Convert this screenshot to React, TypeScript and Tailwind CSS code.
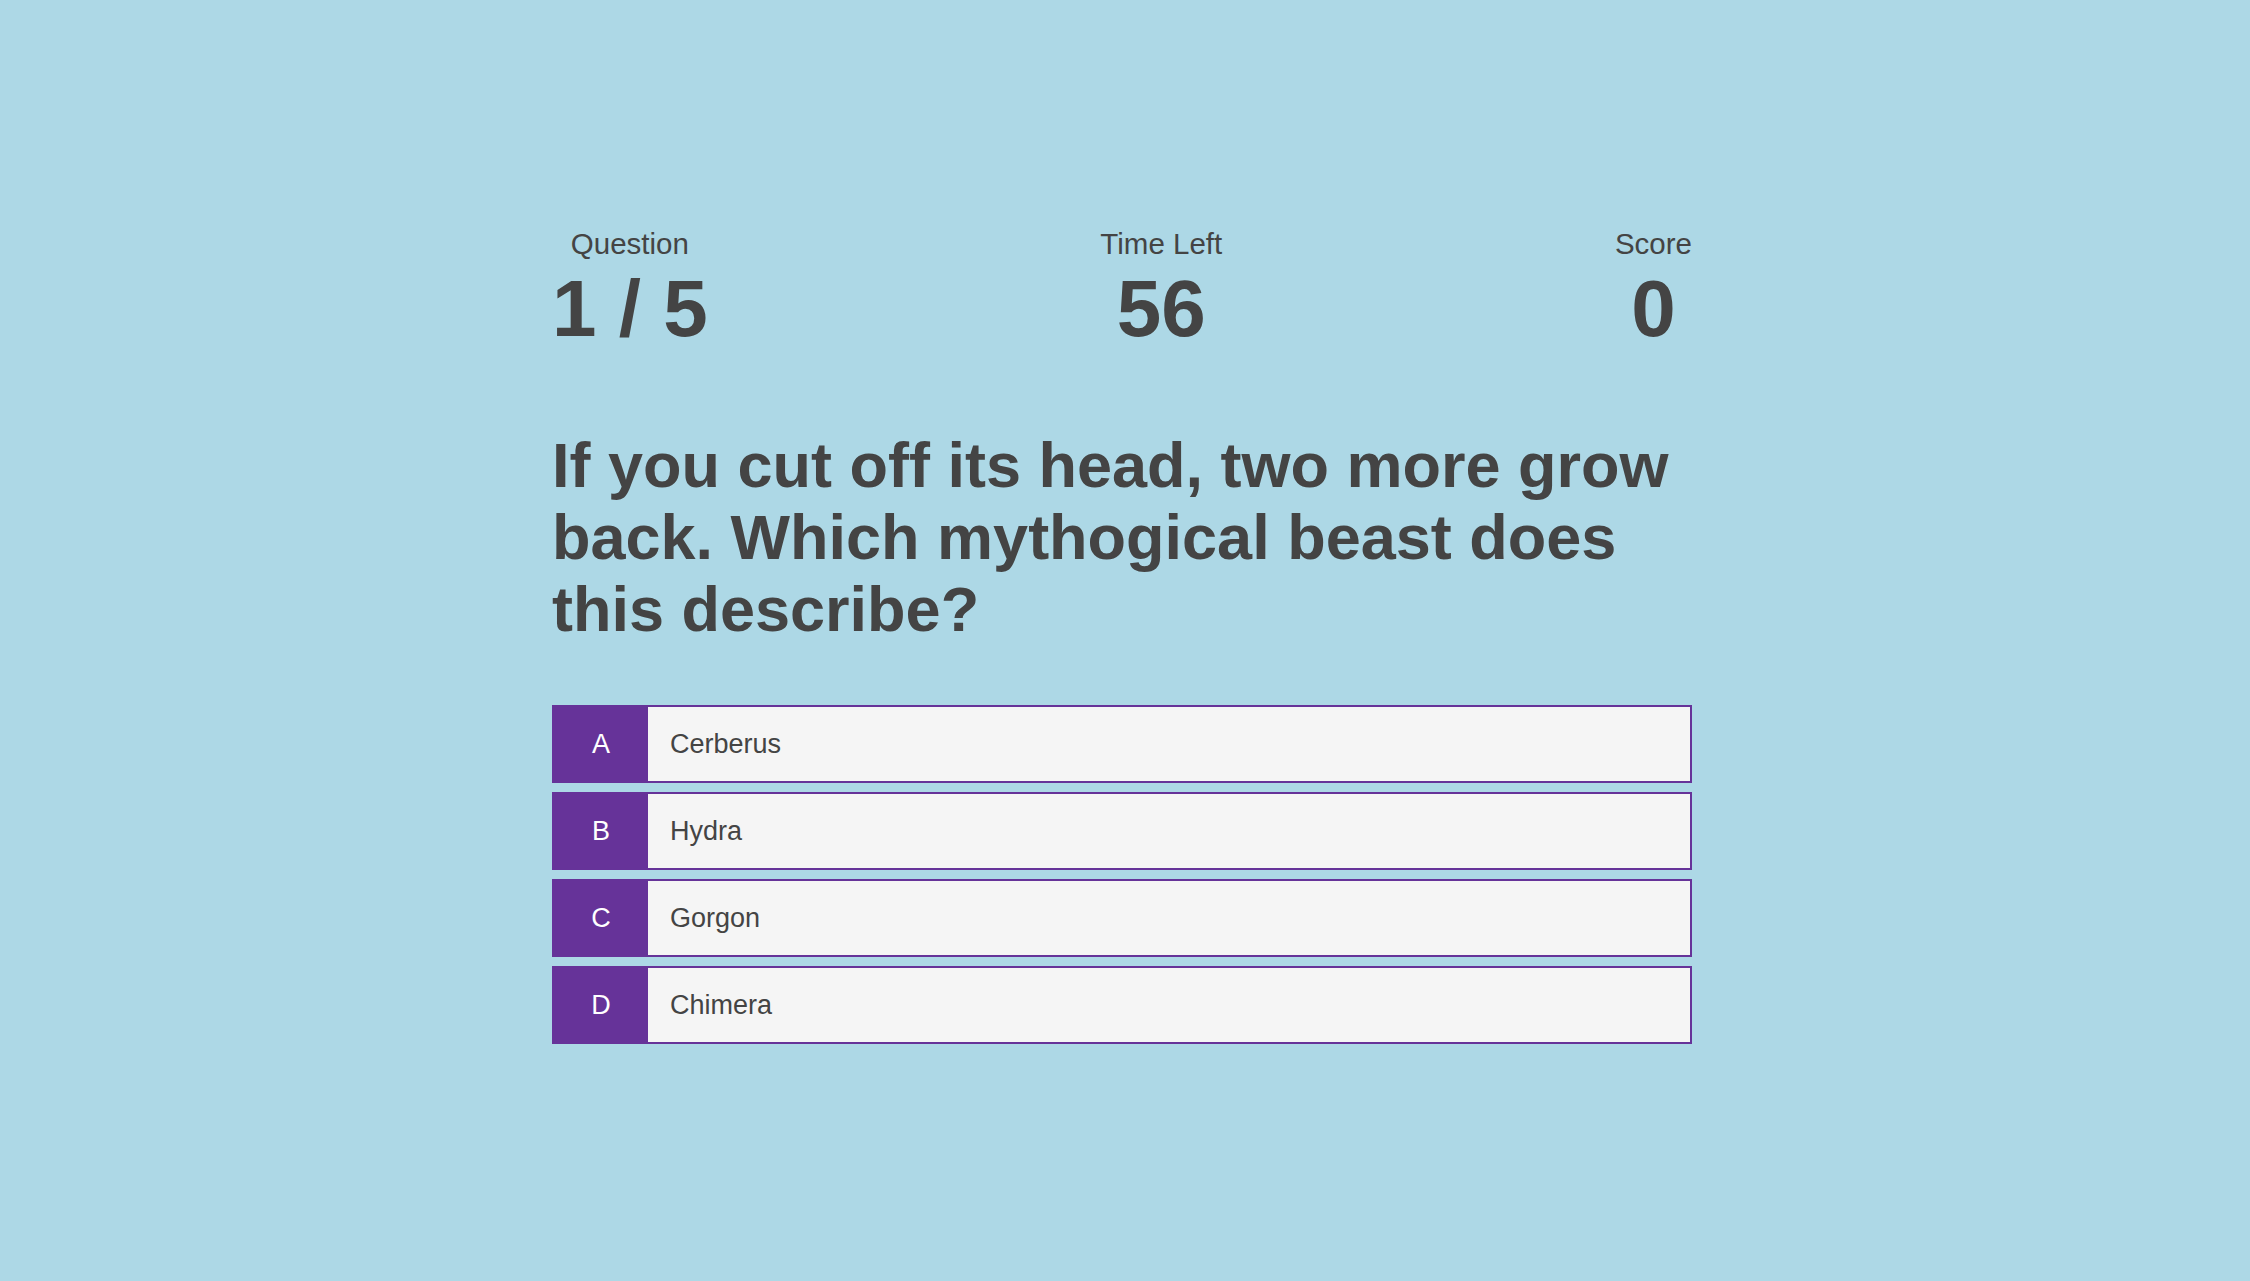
import React from "react";

const answers = [
  { letter: "A", text: "Cerberus" },
  { letter: "B", text: "Hydra" },
  { letter: "C", text: "Gorgon" },
  { letter: "D", text: "Chimera" },
];

function Stat({ label, value }: { label: string; value: string }) {
  return (
    <div className="flex flex-col items-center">
      <div className="text-[29.5px] leading-[34px]">{label}</div>
      <div className="mt-[2px] text-[80px] font-bold leading-[92px]">{value}</div>
    </div>
  );
}

export default function App() {
  return (
    <div
      className="min-h-screen w-full bg-[#add8e6] text-[#444444] flex justify-center pr-[6px]"
      style={{ fontFamily: '"Liberation Sans", Arial, sans-serif' }}
    >
      <div className="w-[1140px] pt-[227px]">
        <div className="flex justify-between">
          <Stat label="Question" value="1 / 5" />
          <Stat label="Time Left" value="56" />
          <Stat label="Score" value="0" />
        </div>
        <h1 className="mt-[74px] text-[63px] font-bold leading-[72px]">
          If you cut off its head, two more grow back. Which mythogical beast does this describe?
        </h1>
        <div className="mt-[60px] flex flex-col gap-[9px]">
          {answers.map((a) => (
            <button
              key={a.letter}
              className="flex h-[78px] w-full border-2 border-[#663399] text-left"
            >
              <div className="flex w-[94px] items-center justify-center bg-[#663399] text-[27px] text-white">
                {a.letter}
              </div>
              <div className="flex flex-1 items-center bg-[#f5f5f5] pl-[22px] text-[27px] text-[#444444]">
                {a.text}
              </div>
            </button>
          ))}
        </div>
      </div>
    </div>
  );
}
